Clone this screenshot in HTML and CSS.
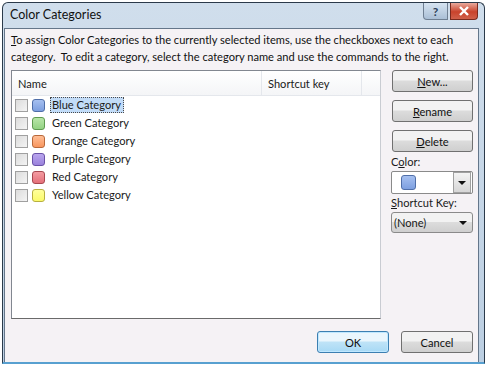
FILE: index.html
```html
<!DOCTYPE html>
<html>
<head>
    <title>Color Categories</title>
    <link rel="stylesheet" href="styles.css">
</head>
<body>
    <div class="window">
        <div class="titlebar">
            <span class="title">Color Categories</span>
            <div class="caption-buttons">
                <div class="cap-btn help">?</div>
                <div class="cap-btn close">
                    <svg width="12" height="10" viewBox="0 0 12 10"><path d="M2 1 L10 9 M10 1 L2 9" stroke="#fff" stroke-width="2.4"/></svg>
                </div>
            </div>
        </div>
        <div class="client">
            <p class="intro"><u>T</u>o assign Color Categories to the currently selected items, use the checkboxes next to each<br>category.&nbsp; To edit a category, select the category name and use the commands to the right.</p>
            <div class="main">
                <div class="listbox">
                    <div class="list-header">
                        <div class="col col-name">Name</div>
                        <div class="col col-key">Shortcut key</div>
                        <div class="col col-rest"></div>
                    </div>
                    <div class="rows">
                        <div class="row"><span class="check"></span><span class="swatch blue"></span><span class="label selected">Blue Category</span></div>
                        <div class="row"><span class="check"></span><span class="swatch green"></span><span class="label">Green Category</span></div>
                        <div class="row"><span class="check"></span><span class="swatch orange"></span><span class="label">Orange Category</span></div>
                        <div class="row"><span class="check"></span><span class="swatch purple"></span><span class="label">Purple Category</span></div>
                        <div class="row"><span class="check"></span><span class="swatch red"></span><span class="label">Red Category</span></div>
                        <div class="row"><span class="check"></span><span class="swatch yellow"></span><span class="label">Yellow Category</span></div>
                    </div>
                </div>
                <div class="side">
                    <button class="btn"><u>N</u>ew...</button>
                    <button class="btn"><u>R</u>ename</button>
                    <button class="btn last"><u>D</u>elete</button>
                    <div class="field-label">C<u>o</u>lor:</div>
                    <div class="combo color-combo">
                        <div class="combo-value"><span class="swatch blue big"></span></div>
                        <div class="drop-btn"><span class="arrow"></span></div>
                    </div>
                    <div class="field-label"><u>S</u>hortcut Key:</div>
                    <div class="combo key-combo">
                        <span>(None)</span>
                        <span class="arrow"></span>
                    </div>
                </div>
            </div>
            <div class="footer">
                <button class="btn ok">OK</button>
                <button class="btn cancel">Cancel</button>
            </div>
        </div>
    </div>
</body>
</html>
```

FILE: styles.css
```css
:root {
    --dialog-bg: #f5f2f5;
    --text: #1a1a1a;
    --border: #828790;
    --ui-size: 11.1px;
}

body {
    margin: 0;
    background: #ffffff;
    font-family: 'Lato', 'Open Sans', sans-serif;
    color: var(--text);
}

.window {
    width: 483px;
    height: 362px;
    margin: 2px 0 0 2px;
    border: 1px solid #2b3a4a;
    border-bottom: 2px solid #58a0d0;
    border-radius: 6px 6px 0 0;
    background: linear-gradient(#d0deec, #bccfe2);
    display: flex;
    flex-direction: column;
    box-sizing: border-box;
    overflow: hidden;
}

.titlebar {
    height: 25px;
    flex: none;
    display: flex;
    justify-content: space-between;
    align-items: flex-start;
    padding: 0 6px 0 7px;
}

.title {
    font-size: 12.5px;
    margin-top: 4px;
    color: #111;
}

.caption-buttons {
    display: flex;
    gap: 2px;
}

.cap-btn {
    height: 16px;
    border: 1px solid #6f7f92;
    border-top: none;
    display: flex;
    align-items: center;
    justify-content: center;
    font-size: 12px;
    font-weight: bold;
}

.help {
    width: 23px;
    background: linear-gradient(#d7e4f1, #aabfd6);
    color: #2c3f5a;
    border-radius: 0 0 0 4px;
}

.close {
    width: 26px;
    background: linear-gradient(#e9a99b, #c9432c 55%, #d0604a);
    border-color: #7a2a1e;
    border-radius: 0 0 4px 0;
}

.client {
    flex: 1;
    background: var(--dialog-bg);
    margin: 0 5px 0 1px;
    border: 1px solid #64768a;
    border-bottom: none;
    display: flex;
    flex-direction: column;
    padding: 2px 0 0 6px;
}

.intro {
    margin: 0;
    font-size: var(--ui-size);
    line-height: 17px;
    color: #111;
    white-space: nowrap;
}

.main {
    display: flex;
    gap: 11px;
    margin-top: 5px;
}

.listbox {
    width: 370px;
    height: 249px;
    box-sizing: border-box;
    background: #fff;
    border: 1px solid var(--border);
    border-right-color: #c9ccd2;
    border-bottom-color: #6a6a6a;
    display: flex;
    flex-direction: column;
}

.list-header {
    display: flex;
    height: 24px;
    background: linear-gradient(#ffffff, #f4f5f7);
    border-bottom: 1px solid #e4e7ec;
    font-size: var(--ui-size);
}

.col {
    display: flex;
    align-items: center;
    padding-left: 6px;
    border-right: 1px solid #e4e7ec;
}

.col-name {
    width: 243px;
}

.col-key {
    width: 93px;
}

.col-rest {
    flex: 1;
    border-right: none;
}

.rows {
    display: flex;
    flex-direction: column;
    padding: 0 0 0 3px;
}

.row {
    display: flex;
    align-items: center;
    height: 18px;
    font-size: var(--ui-size);
}

.check {
    width: 11px;
    height: 11px;
    border: 1px solid #a0a0a0;
    background: linear-gradient(135deg, #dcdcdc, #f4f4f4);
    margin-right: 4px;
}

.swatch {
    width: 11px;
    height: 11px;
    border-radius: 3px;
    border: 1px solid #5a6a8a;
    margin-right: 5px;
}

.swatch.big {
    width: 13px;
    height: 13px;
    margin: 0;
}

.blue { background: linear-gradient(#a6c0f0, #7d9fe0); border-color: #4f6ea8; }
.green { background: linear-gradient(#b8e6a8, #92d282); border-color: #5e9a50; }
.orange { background: linear-gradient(#ffbe96, #f8965e); border-color: #b8683a; }
.purple { background: linear-gradient(#baa6ee, #9a82dc); border-color: #6a52a8; }
.red { background: linear-gradient(#f49ca2, #e4707a); border-color: #a84850; }
.yellow { background: linear-gradient(#ffff9c, #fafa6a); border-color: #b8b040; }

.label {
    padding: 0 2px 1px 1px;
    border: 1px dotted transparent;
}

.label.selected {
    background: #c2dcf8;
    border-color: #4a4a4a;
}

.side {
    width: 81px;
    display: flex;
    flex-direction: column;
}

.btn {
    height: 22px;
    border: 1px solid #707070;
    border-radius: 3px;
    background: linear-gradient(#f2f2f2 45%, #dcdcdc 50%, #cfcfcf);
    font-family: inherit;
    font-size: var(--ui-size);
    color: #111;
    padding: 0;
    margin: 0 0 8px 0;
}

.btn.last {
    margin-bottom: 3px;
}

.field-label {
    font-size: var(--ui-size);
    line-height: 14px;
    margin: 0 0 2px -1px;
}

.combo {
    height: 21px;
    border: 1px solid #8a8a8a;
    border-radius: 2px;
    display: flex;
    align-items: center;
    box-sizing: border-box;
    margin: 0 0 2px -1px;
}

.color-combo {
    height: 23px;
    background: #fff;
}

.combo-value {
    flex: 1;
    padding-left: 9px;
    display: flex;
    align-items: center;
}

.drop-btn {
    width: 16px;
    height: 19px;
    margin-right: 1px;
    border: 1px solid #a0a0a0;
    background: linear-gradient(#f4f4f4, #d6d6d6);
    display: flex;
    align-items: center;
    justify-content: center;
}

.arrow {
    width: 0;
    height: 0;
    border-left: 4px solid transparent;
    border-right: 4px solid transparent;
    border-top: 4px solid #111;
}

.key-combo {
    justify-content: space-between;
    padding: 0 5px 0 2px;
    font-size: var(--ui-size);
    background: linear-gradient(#f2f2f2 45%, #dcdcdc 50%, #cfcfcf);
    border-radius: 3px;
}

.footer {
    display: flex;
    justify-content: flex-end;
    gap: 12px;
    margin-top: 12px;
    padding-right: 5px;
}

.footer .btn {
    width: 72px;
    margin: 0;
}

.btn.ok {
    border-color: #3c7fb1;
    background: linear-gradient(#eaf6fd 45%, #bfe3f7 50%, #a7d9f5);
    box-shadow: inset 0 0 0 1px #c0e8ff;
}
```
